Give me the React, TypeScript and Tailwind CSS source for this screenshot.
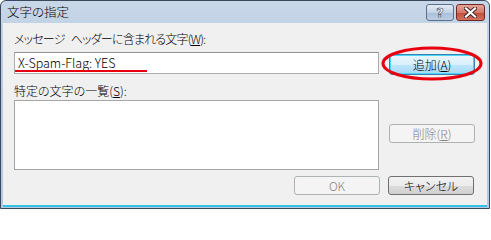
const font = "font-['MS_UI_Gothic','Noto_Sans_CJK_JP',sans-serif]";

function WinButton({
  label,
  mnemonic,
  variant = "normal",
  className = "",
}: {
  label: string;
  mnemonic?: string;
  variant?: "normal" | "focus" | "disabled";
  className?: string;
}) {
  const styles = {
    normal:
      "h-[19px] border-[#707070] bg-[linear-gradient(#f2f2f2_0%,#ebebeb_50%,#dddddd_51%,#cfcfcf_100%)] text-black",
    focus:
      "h-[21px] border-[#3c7fb1] bg-[linear-gradient(#eaf6fd_0%,#d9f0fc_50%,#bee6fd_51%,#a7d9f5_100%)] text-black shadow-[inset_0_0_0_1px_#48d6f8]",
    disabled: "h-[19px] border-[#adb2b5] bg-[#f4f4f4] text-[#838383]",
  }[variant];
  return (
    <div
      className={`flex w-[86px] items-center justify-center rounded-[3px] border text-[12px] leading-none ${styles} ${className}`}
    >
      <span>
        {label}
        {mnemonic && (
          <>
            (<span className="underline underline-offset-1">{mnemonic}</span>)
          </>
        )}
      </span>
    </div>
  );
}

export default function App() {
  return (
    <div className={`relative h-[209px] w-[491px] overflow-hidden bg-white font-light [font-feature-settings:'palt'] ${font}`}>
      {/* window frame */}
      <div className="flex h-[209px] w-[490px] flex-col rounded-t-[6px] border border-[#3a4a5c] bg-[linear-gradient(#c8d7e8,#b9cce2_30%,#b4c8df)]">
        {/* title bar */}
        <div className="flex h-[22px] items-start justify-between pl-[6px] pr-[4px]">
          <span className="mt-[5px] text-[12.5px] leading-none text-black">文字の指定</span>
          <div className="mt-[3px] flex gap-[2px]">
            <div className="flex h-[17px] w-[28px] items-center justify-center rounded-[3px] border border-[#5b6f88] bg-[linear-gradient(#e3ebf4,#c3d3e6_50%,#a9bfd9_51%,#bccde2)]">
              <span className="font-['DejaVu_Sans',sans-serif] text-[13px] font-bold leading-none text-white [-webkit-text-stroke:0.6px_#3b4a5c]">
                ?
              </span>
            </div>
            <div className="flex h-[17px] w-[29px] items-center justify-center rounded-[3px] border border-[#6d2a23] bg-[linear-gradient(#e8a497,#d4796a_50%,#c24a37_51%,#d2735f)]">
              <svg width="13" height="11" viewBox="0 0 13 11">
                <path d="M2 1.5 L11 9.5 M11 1.5 L2 9.5" stroke="#3b2320" strokeWidth="4" strokeLinecap="square" />
                <path d="M2 1.5 L11 9.5 M11 1.5 L2 9.5" stroke="#ffffff" strokeWidth="2.2" strokeLinecap="square" />
              </svg>
            </div>
          </div>
        </div>

        {/* client area */}
        <div className="mx-[2px] mb-[1px] flex flex-1 flex-col border-b-[2px] border-b-[#33c2e6] bg-[#f0f0f0] pl-[11px] pt-[10px] text-[12px] leading-none text-black">
          <div className="h-[13px] tracking-[-0.8px]">
            メッセージ<span className="inline-block w-[6px]" />ヘッダーに含まれる文字(<span className="underline underline-offset-1">W</span>):
          </div>

          <div className="mt-[6px] flex items-start gap-[10px]">
            <div className="relative flex h-[22px] w-[365px] items-center border border-[#abadb3] border-t-[#8e9398] bg-white pl-[3px] text-[12.5px]">
              X-Spam-Flag: YES
              <div className="absolute bottom-[1px] left-0 h-[2px] w-[132px] bg-[#e8000f]" />
            </div>
            <div className="relative mt-[2px]">
              <WinButton label="追加" mnemonic="A" variant="focus" />
              <svg
                className="pointer-events-none absolute left-[-8px] top-[-8px]"
                width="102"
                height="35"
                viewBox="0 0 102 35"
              >
                <ellipse cx="51" cy="17.5" rx="49" ry="15.5" fill="none" stroke="#e8000f" strokeWidth="3" />
              </svg>
            </div>
          </div>

          <div className="mt-[10px] h-[13px]">
            特定の文字の一覧(<span className="underline underline-offset-1">S</span>):
          </div>

          <div className="mt-[2px] flex items-start gap-[10px]">
            <div className="h-[70px] w-[365px] border border-[#a5a5a5] bg-white" />
            <WinButton label="削除" mnemonic="R" variant="disabled" className="mt-[24px]" />
          </div>

          <div className="mt-[6px] flex gap-[8px] pl-[280px]">
            <WinButton label="OK" variant="disabled" />
            <WinButton label="キャンセル" />
          </div>
        </div>
      </div>
    </div>
  );
}
